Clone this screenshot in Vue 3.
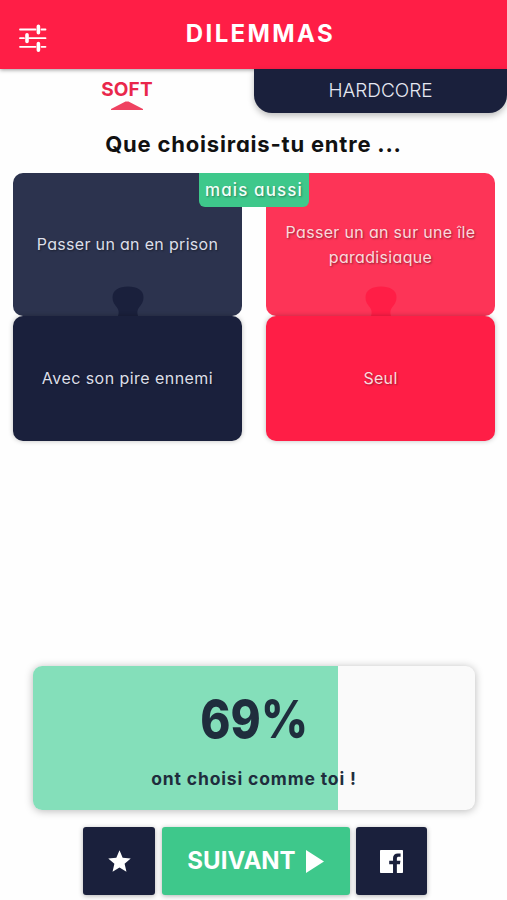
<script setup>
const percent = 69
const choices = [
  { tone: 'navy', main: 'Passer un an en prison', extra: 'Avec son pire ennemi' },
  { tone: 'red', main: 'Passer un an sur une île paradisiaque', extra: 'Seul' },
]
</script>

<template>
  <div class="screen">
    <header class="topbar">
      <svg class="tune" viewBox="0 0 28 28" aria-hidden="true">
        <path d="M1 5.500H16.500M22.500 5.500H26.500M1 14.200H5M10 14.200H26.500M1 22.800H16.500M22.500 22.800H26.500" stroke="currentColor" stroke-width="1.800" stroke-linecap="round" />
        <path d="M19.400 2.200V8.800M8 10.800V17.500M19.400 19.500V26.200" stroke="currentColor" stroke-width="3.600" stroke-linecap="round" />
      </svg>
      <h1 class="title">DILEMMAS</h1>
    </header>

    <nav class="tabs">
      <div class="tab active">
        <span>SOFT</span>
        <svg class="caret" viewBox="0 0 32 9" aria-hidden="true"><path d="M0 9V8L14.500 .5H17.500L32 8V9Z" fill="currentColor" /></svg>
      </div>
      <div class="tab idle"><span>HARDCORE</span></div>
    </nav>

    <h2 class="question">Que choisirais-tu entre ...</h2>

    <main class="choices">
      <div class="badge">mais aussi</div>
      <section v-for="c in choices" :key="c.tone" class="choice" :class="c.tone">
        <div class="main">
          <span>{{ c.main }}</span>
          <svg class="knob" viewBox="0 0 32 30" aria-hidden="true">
            <path d="M16 0.500C25 .5 31.500 4 31.500 11.500C31.500 16 29.500 18.500 27 21.500C25 24 25 27 26 30H6C7 27 7 24 5 21.500C2.500 18.500 .5 16 .5 11.500C.5 4 7 .5 16 .5Z" fill="currentColor" />
          </svg>
        </div>
        <div class="extra"><span>{{ c.extra }}</span></div>
      </section>
    </main>

    <section class="result">
      <div class="fill" :style="{ width: percent + '%' }"></div>
      <strong class="percent">{{ percent }}%</strong>
      <span class="caption">ont choisi comme toi !</span>
    </section>

    <footer class="actions">
      <button class="btn star" aria-label="Favori">
        <svg viewBox="0 0 24 24" class="star-icon"><path d="M12 17.270L18.180 21L16.540 13.970L22 9.240L14.810 8.620L12 2L9.190 8.620L2 9.240L7.450 13.970L5.820 21Z" fill="currentColor" /></svg>
      </button>
      <button class="btn next">
        <span>SUIVANT</span>
        <svg viewBox="0 0 18 23" class="play" aria-hidden="true"><path d="M0 0L18 11.500L0 23Z" fill="currentColor" /></svg>
      </button>
      <button class="btn share" aria-label="Facebook">
        <svg viewBox="3 3 18 18" class="fb"><path d="M3.600 3H20.400A.6.6 0 0 1 21 3.600V20.400A.6.6 0 0 1 20.400 21H16.200V14.200H18.600L19 11.500H16.200V9.700C16.200 8.700 16.700 8.200 17.700 8.200H19.100V5.700H17C14.500 5.700 13.200 7.200 13.200 9.300V11.500H10.200V14.200H13.200V21H3.600A.6.6 0 0 1 3 20.400V3.600A.6.6 0 0 1 3.600 3Z" fill="currentColor" /></svg>
      </button>
    </footer>
  </div>
</template>

<style>
body { margin: 0; background: #fefefe; }
</style>

<style scoped>
.screen {
  width: 507px;
  height: 900px;
  overflow: hidden;
  display: flex;
  flex-direction: column;
  background: #fefefe;
  font-family: Inter, "Liberation Sans", sans-serif;
  font-feature-settings: "cv11" 1;
}
.topbar { position: relative; z-index: 1; flex: none; height: 69px; display: grid; grid-template-columns: 60px 1fr 60px; background: #ff1e46; color: #fff; box-shadow: 0 1px 4px rgba(0, 0, 0, 0.4); }
.tune { width: 28px; height: 28px; margin: 24px 0 0 19px; }
.title { margin: 0; padding: 19px 0 0 14px; text-align: center; font-size: 24px; line-height: 30px; font-weight: 700; letter-spacing: 2.4px; }
.tabs { position: relative; z-index: 2; flex: none; display: grid; grid-template-columns: 254px 253px; height: 44px; }
.tab { display: flex; flex-direction: column; align-items: center; font-size: 19px; line-height: 24px; padding-top: 9px; }
.active { color: #e9274b; font-weight: 700; }
.active span { letter-spacing: 0.2px; }
.caret { width: 32px; height: 9px; margin-top: -1px; color: #ef4261; }
.idle { padding-top: 10px; background: #1a203c; color: #e6e8f2; font-weight: 350; border-radius: 0 0 18px 18px; box-shadow: 0 3px 6px rgba(0, 0, 0, 0.25); }
.question { flex: none; margin: 0; height: 60px; padding-top: 17px; box-sizing: border-box; text-align: center; font-size: 22px; line-height: 28px; font-weight: 700; letter-spacing: 0.8px; color: #111; }
.choices { position: relative; flex: none; display: grid; grid-template-columns: 229px 229px; gap: 24px; padding-left: 13px; height: 268px; }
.badge { position: absolute; z-index: 2; left: 199px; top: 0; width: 110px; height: 34px; display: grid; place-items: center; border-radius: 0 0 6px 6px; background: #3ec88b; color: #f3fff9; font-size: 17px; font-weight: 500; letter-spacing: 1.1px; text-shadow: 1px 1px 2px rgba(0, 0, 0, 0.35); }
.choice { display: grid; grid-template-rows: 143px 125px; color: #dcdfe9; font-size: 16px; line-height: 25px; letter-spacing: 0.32px; text-align: center; text-shadow: 1px 1px 2px rgba(0, 0, 0, 0.4); }
.main, .extra { position: relative; display: grid; place-items: center; border-radius: 10px; padding: 0 12px; }
.knob { position: absolute; left: 99px; bottom: 0; width: 32px; height: 30px; }
.navy .main { background: #2c334e; }
.navy .extra { background: #1a203c; letter-spacing: 0.45px; }
.navy .knob { color: #1a203c; }
.red { color: #fbd9dc; }
.red .main { background: #fd3457; }
.red .extra { background: #ff1e46; }
.red .knob { color: #ff1e46; }
.extra { box-shadow: 0 0 5px rgba(0, 0, 0, 0.25); }
.result { position: relative; flex: none; margin: auto 0 0 33px; width: 442px; height: 144px; display: flex; flex-direction: column; align-items: center; overflow: hidden; border-radius: 9px; background: #fafafa; color: #1f2d3d; box-shadow: 0 1px 8px rgba(0, 0, 0, 0.28); }
.fill { position: absolute; inset: 0 auto 0 0; background: #84dfba; }
.percent { position: relative; margin-top: 21px; font-size: 52px; line-height: 66px; font-weight: 800; transform: scaleX(0.88); }
.caption { position: relative; margin-top: 14px; font-size: 17.5px; line-height: 24px; font-weight: 700; letter-spacing: 0.85px; }
.actions { flex: none; display: flex; gap: 6.5px; padding: 17px 0 5px 83px; height: 68px; }
.btn { display: flex; align-items: center; justify-content: center; border: 0; padding: 0; border-radius: 3px; color: #fff; font: inherit; box-shadow: 0 1px 5px rgba(0, 0, 0, 0.3); }
.star { width: 72px; background: #1a203c; }
.share { width: 71px; background: #1a203c; }
.next { width: 188px; gap: 10px; background: #3ec88b; font-size: 24px; font-weight: 700; }
.next span { margin-top: -2px; }
.star-icon { width: 27px; height: 27px; }
.play { width: 18px; height: 23px; }
.fb { width: 23px; height: 23px; }
</style>
